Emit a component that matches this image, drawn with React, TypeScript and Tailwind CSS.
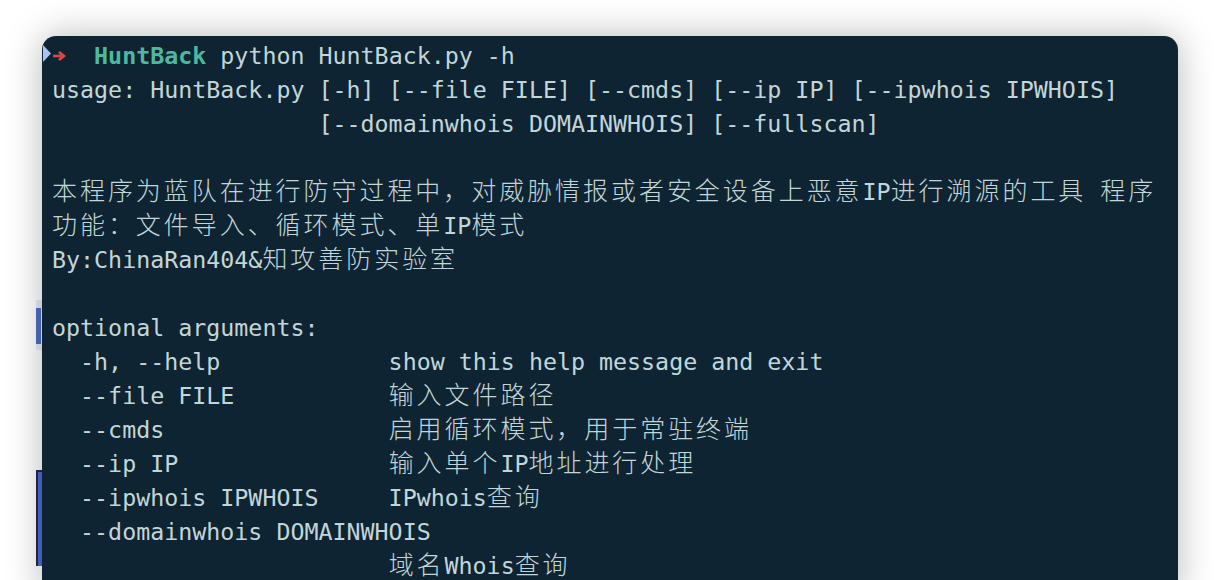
import React from "react";

const isWide = (ch: string) => /[\u3000-\u303f\u4e00-\u9fff\uff00-\uffef]/.test(ch);

function Seg({ text }: { text: string }) {
  const parts: { wide: boolean; s: string }[] = [];
  for (const ch of Array.from(text)) {
    const w = isWide(ch);
    const last = parts[parts.length - 1];
    if (last && last.wide === w) last.s += ch;
    else parts.push({ wide: w, s: ch });
  }
  return (
    <>
      {parts.map((p, i) =>
        p.wide ? (
          <span
            key={i}
            className="font-['Noto_Sans_CJK_SC','Noto_Sans_CJK_JP',sans-serif] text-[25px] leading-none font-light tracking-[2.95px]"
          >
            {p.s}
          </span>
        ) : (
          <span key={i}>{p.s}</span>
        )
      )}
    </>
  );
}

function Line({ text }: { text: string }) {
  return (
    <div className="h-[34px] leading-[34px] whitespace-pre">
      <Seg text={text} />
    </div>
  );
}

const lines = [
  "usage: HuntBack.py [-h] [--file FILE] [--cmds] [--ip IP] [--ipwhois IPWHOIS]",
  "                   [--domainwhois DOMAINWHOIS] [--fullscan]",
  "",
  "本程序为蓝队在进行防守过程中，对威胁情报或者安全设备上恶意IP进行溯源的工具 程序",
  "功能：文件导入、循环模式、单IP模式",
  "By:ChinaRan404&知攻善防实验室",
  "",
  "optional arguments:",
  "  -h, --help            show this help message and exit",
  "  --file FILE           输入文件路径",
  "  --cmds                启用循环模式，用于常驻终端",
  "  --ip IP               输入单个IP地址进行处理",
  "  --ipwhois IPWHOIS     IPwhois查询",
  "  --domainwhois DOMAINWHOIS",
  "                        域名Whois查询",
];

export default function App() {
  return (
    <div className="relative h-[580px] w-[1214px] overflow-hidden bg-white">
      {/* window behind, peeking out on the left */}
      <div className="absolute left-[36px] top-[300px] h-[50px] w-[8px] bg-[#e8ecf4]">
        <div className="mt-[8px] h-[36px] w-[5px] bg-[#4e6fc4]" />
      </div>
      <div className="absolute left-[36px] top-[470px] h-[96px] w-[8px] border-l-2 border-t-2 border-[#222a44] bg-[#4a6cd4]" />

      <div className="relative ml-[42px] mt-[36px] h-[560px] w-[1136px] rounded-t-[14px] bg-[#0f2432] pl-[10px] pt-[3px] font-['DejaVu_Sans_Mono',monospace] text-[23.3px] text-[#c2d6d9] shadow-[0_0_36px_rgba(0,0,0,0.28)]">
        <svg
          className="absolute left-[1px] top-[9px]"
          width="8"
          height="17"
          viewBox="0 0 8 17"
        >
          <polygon points="0,0 8,8.5 0,17" fill="#a9c3f4" />
        </svg>
        <div className="flex h-[34px] items-center whitespace-pre leading-[34px]">
          <span className="inline-flex w-[14.04px] items-center">
            <svg width="14" height="10" viewBox="0 0 14 10">
              <path d="M1 5 H11" stroke="#e0454b" strokeWidth="2.6" />
              <path d="M7 1 L12 5 L7 9" stroke="#e0454b" strokeWidth="2.6" fill="none" />
            </svg>
          </span>
          <span>{"  "}</span>
          <span className="font-bold text-[#4db8a0]">HuntBack</span>
          <span> python HuntBack.py -h</span>
        </div>
        {lines.map((l, i) => (
          <Line key={i} text={l} />
        ))}
      </div>
    </div>
  );
}
